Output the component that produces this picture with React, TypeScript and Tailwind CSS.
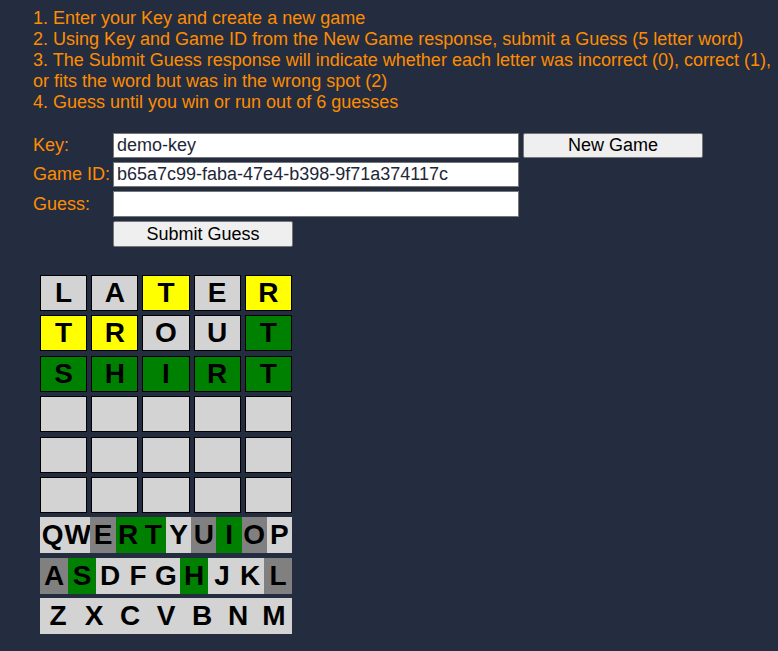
const LIGHT = "bg-[#d3d3d3]";
const GRAY = "bg-[#808080]";
const GREEN = "bg-[#008000]";
const YELLOW = "bg-[#ffff00]";

const board: { l: string; c: string }[][] = [
  [
    { l: "L", c: LIGHT },
    { l: "A", c: LIGHT },
    { l: "T", c: YELLOW },
    { l: "E", c: LIGHT },
    { l: "R", c: YELLOW },
  ],
  [
    { l: "T", c: YELLOW },
    { l: "R", c: YELLOW },
    { l: "O", c: LIGHT },
    { l: "U", c: LIGHT },
    { l: "T", c: GREEN },
  ],
  [
    { l: "S", c: GREEN },
    { l: "H", c: GREEN },
    { l: "I", c: GREEN },
    { l: "R", c: GREEN },
    { l: "T", c: GREEN },
  ],
  [1, 2, 3, 4, 5].map(() => ({ l: "", c: LIGHT })),
  [1, 2, 3, 4, 5].map(() => ({ l: "", c: LIGHT })),
  [1, 2, 3, 4, 5].map(() => ({ l: "", c: LIGHT })),
];

const used: Record<string, string> = {
  E: GRAY,
  R: GREEN,
  T: GREEN,
  U: GRAY,
  I: GREEN,
  O: GRAY,
  A: GRAY,
  S: GREEN,
  H: GREEN,
  L: GRAY,
};

const keyRows = ["QWERTYUIOP", "ASDFGHJKL", "ZXCVBNM"];

function Field({ label, value }: { label: string; value: string }) {
  return (
    <div className="flex items-center">
      <label className="w-[80px] text-[#ff8c00]">{label}</label>
      <input
        readOnly
        value={value}
        className="w-[406px] h-[25px] bg-white border border-[#767676] px-[3px] text-[#1e2738] outline-none"
      />
    </div>
  );
}

export default function App() {
  return (
    <div className="min-h-screen bg-[#232d3f] pl-[33px] pr-[4px] pt-[8px] text-[18px] leading-[1.15] font-['Liberation_Sans',Arial,sans-serif]">
      <div className="text-[#ff8c00] leading-[21px]">
        <div>1. Enter your Key and create a new game</div>
        <div>2. Using Key and Game ID from the New Game response, submit a Guess (5 letter word)</div>
        <div>
          3. The Submit Guess response will indicate whether each letter was incorrect (0), correct (1), or fits
          the word but was in the wrong spot (2)
        </div>
        <div>4. Guess until you win or run out of 6 guesses</div>
      </div>

      <div className="mt-[20px] flex flex-col gap-1">
        <div className="flex items-center">
          <Field label="Key:" value="demo-key" />
          <button className="ml-1 w-[180px] h-[25px] bg-[#efefef] border border-[#767676] rounded-[2px] text-black">
            New Game
          </button>
        </div>
        <Field label="Game ID:" value="b65a7c99-faba-47e4-b398-9f71a374117c" />
        <div className="flex items-center">
          <label className="w-[80px] text-[#ff8c00]">Guess:</label>
          <input className="w-[406px] h-[26px] bg-white border border-[#767676] px-[3px] outline-none" />
        </div>
        <button className="ml-[80px] w-[180px] h-[26px] bg-[#efefef] border border-[#767676] rounded-[2px] text-black">
          Submit Guess
        </button>
      </div>

      <div className="mt-[28px] ml-[7px] w-[252px] flex flex-col gap-[4.4px] text-[28px] font-bold text-black">
        {board.map((row, i) => (
          <div key={i} className="grid grid-cols-5 gap-1">
            {row.map((t, j) => (
              <div key={j} className={`h-9 border border-black flex items-center justify-center ${t.c}`}>
                {t.l}
              </div>
            ))}
          </div>
        ))}
        {keyRows.map((row) => (
          <div key={row} className={`h-9 flex ${LIGHT}`}>
            {row.split("").map((k) => (
              <div key={k} className={`flex-1 basis-0 min-w-0 flex items-center justify-center ${used[k] ?? LIGHT}`}>
                {k}
              </div>
            ))}
          </div>
        ))}
      </div>
    </div>
  );
}
